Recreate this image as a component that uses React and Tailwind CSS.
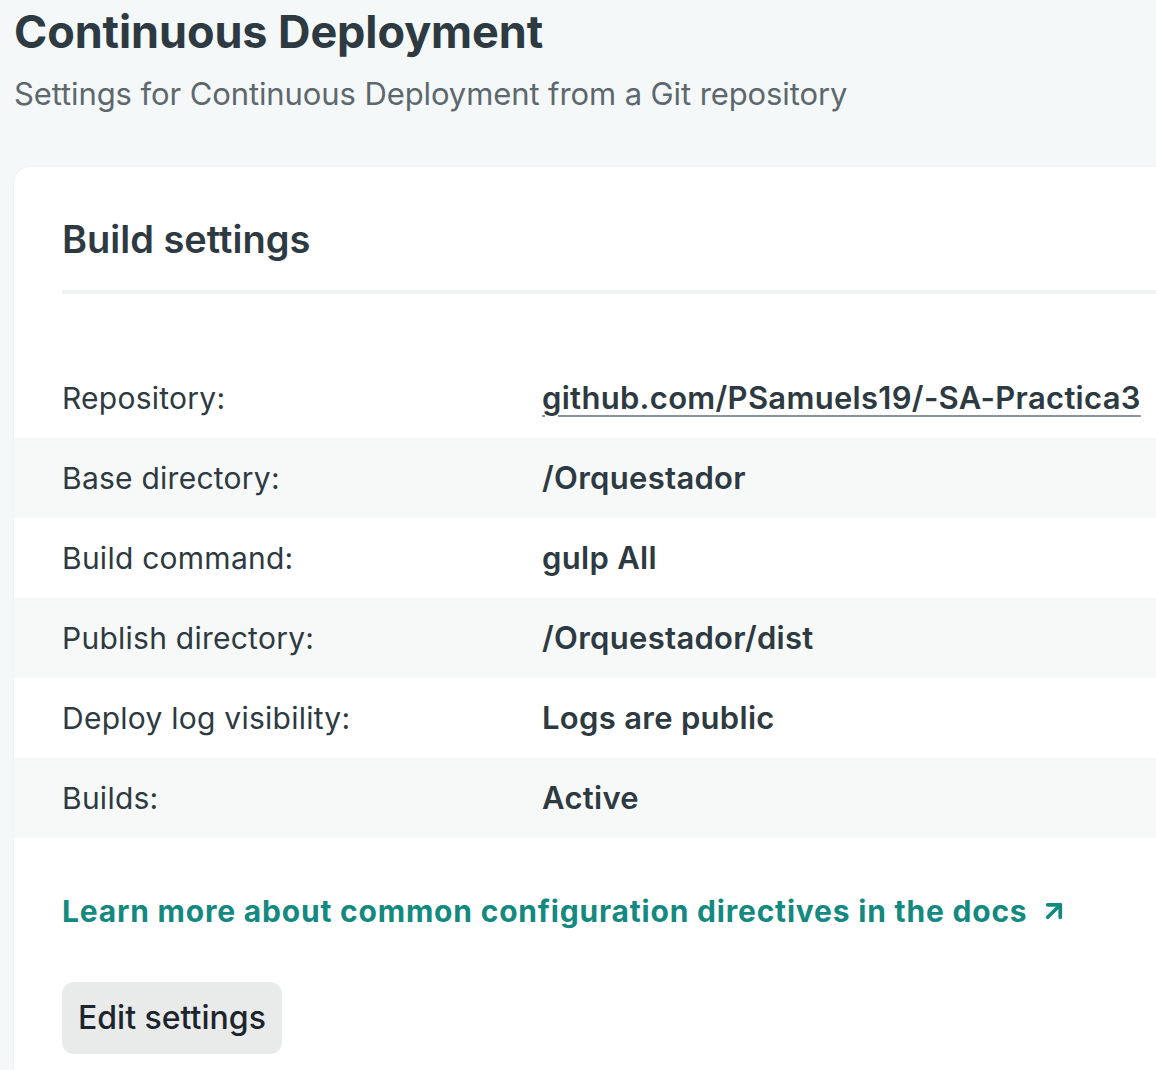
import React from 'react';
import { ArrowUpRight } from 'lucide-react';

const rows = [
  { label: 'Repository:', value: 'github.com/PSamuels19/-SA-Practica3', link: true },
  { label: 'Base directory:', value: '/Orquestador' },
  { label: 'Build command:', value: 'gulp All' },
  { label: 'Publish directory:', value: '/Orquestador/dist' },
  { label: 'Deploy log visibility:', value: 'Logs are public' },
  { label: 'Builds:', value: 'Active' },
];

function App() {
  return (
    <div
      className="h-screen overflow-hidden bg-[#f5f8f9] text-[#2e3a41]"
      style={{ fontFamily: 'Inter, "Liberation Sans", sans-serif' }}
    >
      {/* Page header */}
      <header className="pl-[14px] pt-[4px]">
        <h1 className="text-[45px] font-bold leading-[56px] tracking-[-0.1px]">Continuous Deployment</h1>
        <p className="mt-[14px] text-[31px] leading-[40px] text-[#5d686e] tracking-[-0.1px]">
          Settings for Continuous Deployment from a Git repository
        </p>
      </header>

      {/* Card */}
      <section className="ml-[14px] mt-[53px] rounded-tl-2xl bg-white shadow-[0_0_2px_rgba(0,0,0,0.08)] pb-[16px]">
        <div className="pl-[48px] pt-[47px]">
          <h2 className="text-[38px] font-semibold leading-[50px] pb-[26px] border-b-4 border-[#f0f3f3]">
            Build settings
          </h2>
        </div>

        <dl className="mt-[64px]">
          {rows.map((row, i) => (
            <div
              key={row.label}
              className={`grid grid-cols-[480px_1fr] items-center h-[80px] pl-[48px] ${i % 2 === 1 ? 'bg-[#f7f9f9]' : ''}`}
            >
              <dt className="text-[30px] leading-[40px] tracking-[0.25px]">{row.label}</dt>
              <dd className="text-[31px] leading-[40px] font-semibold tracking-[0.3px]">
                {row.link ? (
                  <a href="#" className="underline decoration-[#8b9397] decoration-2 underline-offset-[6px]">
                    {row.value}
                  </a>
                ) : (
                  row.value
                )}
              </dd>
            </div>
          ))}
        </dl>

        <div className="pl-[48px] pt-[53px]">
          <a href="#" className="inline-flex items-center gap-[12px] text-[30px] leading-[40px] font-bold tracking-[0.8px] text-[#14897f]">
            Learn more about common configuration directives in the docs
            <ArrowUpRight size={30} strokeWidth={3} />
          </a>
        </div>

        <div className="pl-[48px] pt-[51px]">
          <button className="h-[72px] px-[16px] rounded-xl bg-[#e9ebeb] text-[32px] font-medium text-[#1c252b]">
            Edit settings
          </button>
        </div>
      </section>
    </div>
  );
}

export default App;
